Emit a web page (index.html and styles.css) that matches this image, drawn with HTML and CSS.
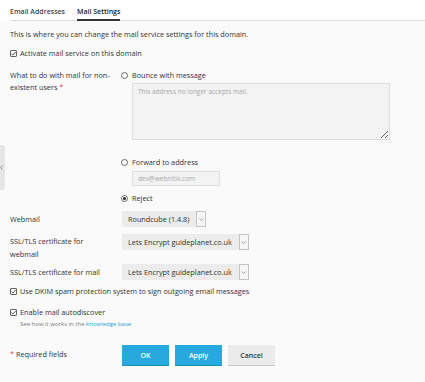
FILE: index.html
```html
<!DOCTYPE html>
<html lang="en">
<head>
    <meta charset="UTF-8">
    <meta name="viewport" content="width=device-width, initial-scale=1.0">
    <title>Mail Settings</title>
    <link rel="stylesheet" href="styles.css">
</head>
<body>
    <div class="side-toggle">
        <svg width="3" height="5" viewBox="0 0 3 5"><path d="M2.5 0.5 L0.5 2.5 L2.5 4.5" fill="none" stroke="#777" stroke-width="0.8"/></svg>
    </div>

    <div class="tabs-wrap">
        <div class="tabs">
            <a class="tab">Email Addresses</a>
            <a class="tab active">Mail Settings</a>
        </div>
    </div>

    <div class="content">
        <p class="intro">This is where you can change the mail service settings for this domain.</p>

        <label class="check">
            <span class="box"><svg width="7" height="7" viewBox="0 0 7 7"><path d="M1.3 3.6 L2.9 5.1 L5.8 1.8" fill="none" stroke="#444" stroke-width="0.9"/></svg></span>
            Activate mail service on this domain
        </label>

        <div class="form-row row-nonexist">
            <div class="label">
                <span class="line">What to do with mail for non-</span>
                <span class="line">existent users <span class="req">*</span></span>
            </div>
            <div class="field">
                <label class="radio"><span class="dot"></span>Bounce with message</label>
                <textarea class="message" placeholder="This address no longer accepts mail."></textarea>
                <label class="radio radio-forward"><span class="dot"></span>Forward to address</label>
                <input class="address" type="text" placeholder="dev@webnitix.com">
                <label class="radio radio-reject"><span class="dot checked"></span>Reject</label>
            </div>
        </div>

        <div class="form-row row-select">
            <div class="label single">Webmail</div>
            <div class="field">
                <div class="select"><span class="value">Roundcube (1.4.8)</span><span class="arrow"><svg width="5" height="3" viewBox="0 0 5 3"><path d="M0.5 0.5 L2.5 2.5 L4.5 0.5" fill="none" stroke="#888" stroke-width="0.7"/></svg></span></div>
            </div>
        </div>

        <div class="form-row row-select">
            <div class="label double">SSL/TLS certificate for webmail</div>
            <div class="field">
                <div class="select"><span class="value">Lets Encrypt guideplanet.co.uk</span><span class="arrow"><svg width="5" height="3" viewBox="0 0 5 3"><path d="M0.5 0.5 L2.5 2.5 L4.5 0.5" fill="none" stroke="#888" stroke-width="0.7"/></svg></span></div>
            </div>
        </div>

        <div class="form-row row-select row-tight">
            <div class="label single">SSL/TLS certificate for mail</div>
            <div class="field">
                <div class="select"><span class="value">Lets Encrypt guideplanet.co.uk</span><span class="arrow"><svg width="5" height="3" viewBox="0 0 5 3"><path d="M0.5 0.5 L2.5 2.5 L4.5 0.5" fill="none" stroke="#888" stroke-width="0.7"/></svg></span></div>
            </div>
        </div>

        <label class="check check-dkim">
            <span class="box"><svg width="7" height="7" viewBox="0 0 7 7"><path d="M1.3 3.6 L2.9 5.1 L5.8 1.8" fill="none" stroke="#444" stroke-width="0.9"/></svg></span>
            Use DKIM spam protection system to sign outgoing email messages
        </label>

        <label class="check check-auto">
            <span class="box"><svg width="7" height="7" viewBox="0 0 7 7"><path d="M1.3 3.6 L2.9 5.1 L5.8 1.8" fill="none" stroke="#444" stroke-width="0.9"/></svg></span>
            Enable mail autodiscover
        </label>
        <p class="hint">See how it works in the <a href="#">knowledge base</a></p>

        <div class="form-row row-buttons">
            <div class="label single"><span class="req">*</span> Required fields</div>
            <div class="buttons">
                <button class="btn primary">OK</button>
                <button class="btn primary">Apply</button>
                <button class="btn">Cancel</button>
            </div>
        </div>
    </div>
</body>
</html>
```

FILE: styles.css
```css
* {
    box-sizing: border-box;
    margin: 0;
    padding: 0;
}

body {
    font-family: "Open Sans", "Liberation Sans", sans-serif;
    font-size: 7.3px;
    line-height: 12px;
    color: #333;
    background-color: #fafafa;
    position: relative;
    min-height: 382px;
}

.side-toggle {
    position: absolute;
    left: 0;
    top: 145px;
    width: 5px;
    height: 45px;
    background: #e6e6e6;
    border-radius: 0 2px 2px 0;
    display: flex;
    align-items: center;
}

.tabs-wrap {
    background: #fff;
    padding: 6px 0 0 10px;
}

.tabs {
    display: flex;
    gap: 12px;
    border-bottom: 1px solid #ddd;
}

.tab {
    font-size: 7px;
    font-weight: 600;
    color: #444;
    line-height: 12px;
    padding-bottom: 1px;
    border-bottom: 2px solid transparent;
    margin-bottom: -1px;
}

.tab.active {
    color: #222;
    border-bottom-color: #333;
}

.content {
    padding: 0 10px;
}

.intro {
    margin-top: 7px;
}

.check {
    display: flex;
    align-items: center;
    gap: 3px;
    margin-top: 7px;
}

.box {
    width: 7px;
    height: 7px;
    border: 1px solid #666;
    border-radius: 1px;
    background: #fff;
    display: flex;
}

.box svg {
    margin: -1px;
}

.form-row {
    display: grid;
    grid-template-columns: 111px 1fr;
    align-items: start;
    margin-top: 7px;
}

.label {
    padding-right: 8px;
}

.label .line {
    display: block;
    white-space: nowrap;
}

.row-nonexist {
    margin-top: 10px;
}

.req {
    color: #e5484d;
}

.field {
    display: flex;
    flex-direction: column;
    align-items: flex-start;
}

.radio {
    display: flex;
    align-items: center;
    gap: 4px;
}

.dot {
    width: 7px;
    height: 7px;
    border: 1px solid #666;
    border-radius: 50%;
    background: #fff;
    display: flex;
    align-items: center;
    justify-content: center;
}

.dot.checked::after {
    content: "";
    width: 3px;
    height: 3px;
    border-radius: 50%;
    background: #222;
}

.message {
    margin: 2px 0 0 11px;
    width: 258px;
    height: 57px;
    background: #f3f3f3;
    border: 1px solid #ddd;
    padding: 3px 5px;
    font-family: inherit;
    font-size: 6.5px;
    line-height: 9px;
    resize: vertical;
}

.message::placeholder,
.address::placeholder {
    color: #a8a8a8;
}

.radio-forward {
    margin-top: 16px;
}

.address {
    margin: 3px 0 0 11px;
    width: 88px;
    height: 15px;
    background: #f3f3f3;
    border: 1px solid #ddd;
    padding: 0 5px;
    font-family: inherit;
    font-size: 6.5px;
}

.radio-reject {
    margin-top: 6px;
}

.row-select .label.single {
    line-height: 16px;
}

.row-select .label.double {
    padding-top: 1px;
    line-height: 13px;
}

.row-tight {
    margin-top: 3px;
}

.row-select .field {
    padding-left: 1px;
}

.select {
    display: flex;
    height: 16px;
    background: #ececec;
    line-height: 16px;
}

.select .value {
    padding: 0 7px 0 6px;
    color: #333;
}

.select .arrow {
    width: 10px;
    border: 1px solid #c4c4c4;
    background: #f6f6f6;
    display: flex;
    align-items: center;
    justify-content: center;
}

.check-dkim {
    margin-top: 5px;
}

.check-auto {
    margin-top: 9px;
}

.hint {
    font-size: 6px;
    line-height: 10px;
    color: #777;
    padding-left: 10px;
    margin-top: 1px;
}

.hint a {
    color: #2a9fd6;
    text-decoration: none;
}

.row-buttons {
    margin-top: 16px;
    align-items: center;
}

.row-buttons .label {
    margin-top: -4px;
}

.buttons {
    display: flex;
    gap: 6px;
    padding-left: 1px;
}

.btn {
    width: 47px;
    height: 21px;
    border: none;
    border-bottom: 1px solid #c9c9c9;
    background: #ebebeb;
    color: #333;
    font-family: inherit;
    font-size: 7px;
    font-weight: 600;
}

.btn.primary {
    background: #28a9de;
    border-bottom-color: #1f8fc0;
    color: #fff;
}
```
